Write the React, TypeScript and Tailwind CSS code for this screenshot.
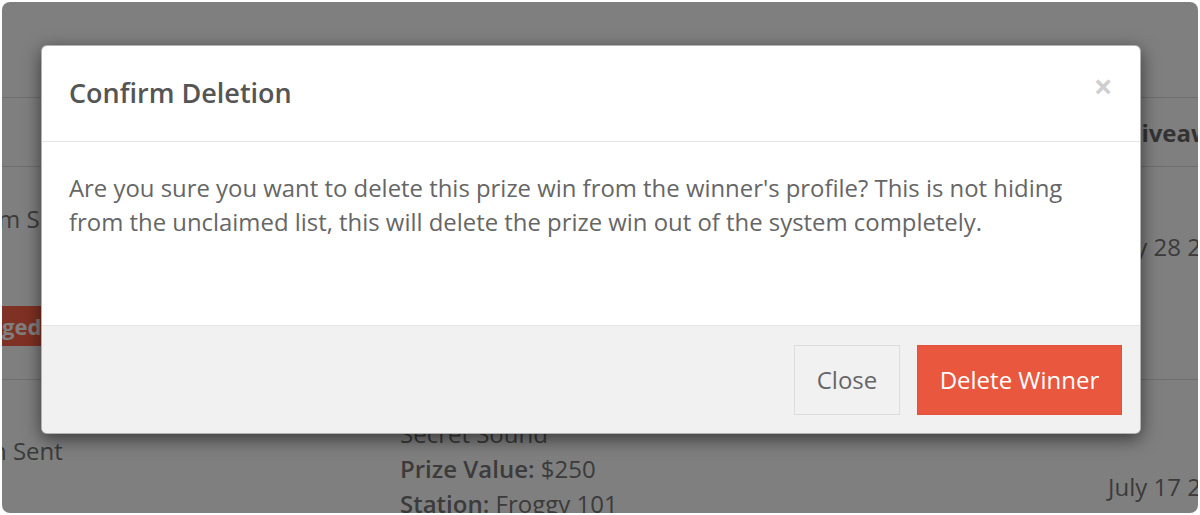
import React from "react";

export default function App() {
  return (
    <div className="w-[1200px] h-[515px] bg-white p-[2px] font-['Open_Sans',sans-serif]">
      <div className="relative w-full h-full rounded-[8px] overflow-hidden bg-white">
        {/* page content behind the overlay */}
        <div className="flex flex-col text-[24px] leading-[35px] text-[#777]">
          <div className="h-[96px] border-b border-[#dcdcdc]" />
          <div className="h-[69px] border-b border-[#dcdcdc] flex items-center">
            <div className="w-[1122px] shrink-0" />
            <div className="font-bold text-[#666] whitespace-nowrap">Giveaway</div>
          </div>
          <div className="h-[213px] border-b border-[#dcdcdc] flex">
            <div className="w-[398px] shrink-0 flex flex-col pt-[34px]">
              <div className="whitespace-nowrap -ml-[4px]">m Submitted</div>
              <div className="mt-[70px]">
                <span className="inline-block h-[40px] leading-[40px] pl-0 pr-[8px] bg-[#ff6246] text-white font-bold text-[22px]">
                  ged
                </span>
              </div>
            </div>
            <div className="w-[708px] shrink-0" />
            <div className="pt-[62px] whitespace-nowrap">July 28 2023</div>
          </div>
          <div className="flex">
            <div className="w-[398px] shrink-0 pt-[53px]">
              <div className="whitespace-nowrap -ml-[10px]">n Sent</div>
            </div>
            <div className="w-[708px] shrink-0 pt-[36px] flex flex-col">
              <div className="whitespace-nowrap">Secret Sound</div>
              <div className="whitespace-nowrap">
                <span className="font-semibold">Prize Value:</span> $250
              </div>
              <div className="whitespace-nowrap">
                <span className="font-semibold">Station:</span> Froggy 101
              </div>
            </div>
            <div className="pt-[89px] whitespace-nowrap">July 17 2023</div>
          </div>
        </div>

        {/* overlay */}
        <div className="absolute inset-0 bg-black/50" />

        {/* modal */}
        <div className="absolute left-[39px] top-[43px] w-[1100px] bg-white rounded-[6px] overflow-hidden border border-black/30 shadow-[0_5px_18px_rgba(0,0,0,0.55)]">
          <div className="h-[96px] border-b border-[#e5e5e5] flex items-center justify-between pl-[27px] pr-[27px]">
            <h4 className="text-[27px] font-semibold text-[#555]">Confirm Deletion</h4>
            <button className="text-[34px] leading-none font-bold text-black/20 -mt-[16px]">×</button>
          </div>
          <div className="h-[183px] pl-[27px] pr-[40px] pt-[29px] text-[23.9px] leading-[34px] text-[#666]">
            <p>
              Are you sure you want to delete this prize win from the winner's profile? This is not hiding
              from the unclaimed list, this will delete the prize win out of the system completely.
            </p>
          </div>
          <div className="h-[108px] bg-[#f1f1f1] border-t border-[#e5e5e5] flex items-center justify-end gap-[17px] pr-[18px]">
            <button className="w-[106px] h-[70px] border border-[#dcdcdc] bg-[#f1f1f1] text-[24px] text-[#666]">
              Close
            </button>
            <button className="w-[205px] h-[70px] border border-[#e4523a] bg-[#e9573f] text-[24px] text-white">
              Delete Winner
            </button>
          </div>
        </div>
      </div>
    </div>
  );
}
